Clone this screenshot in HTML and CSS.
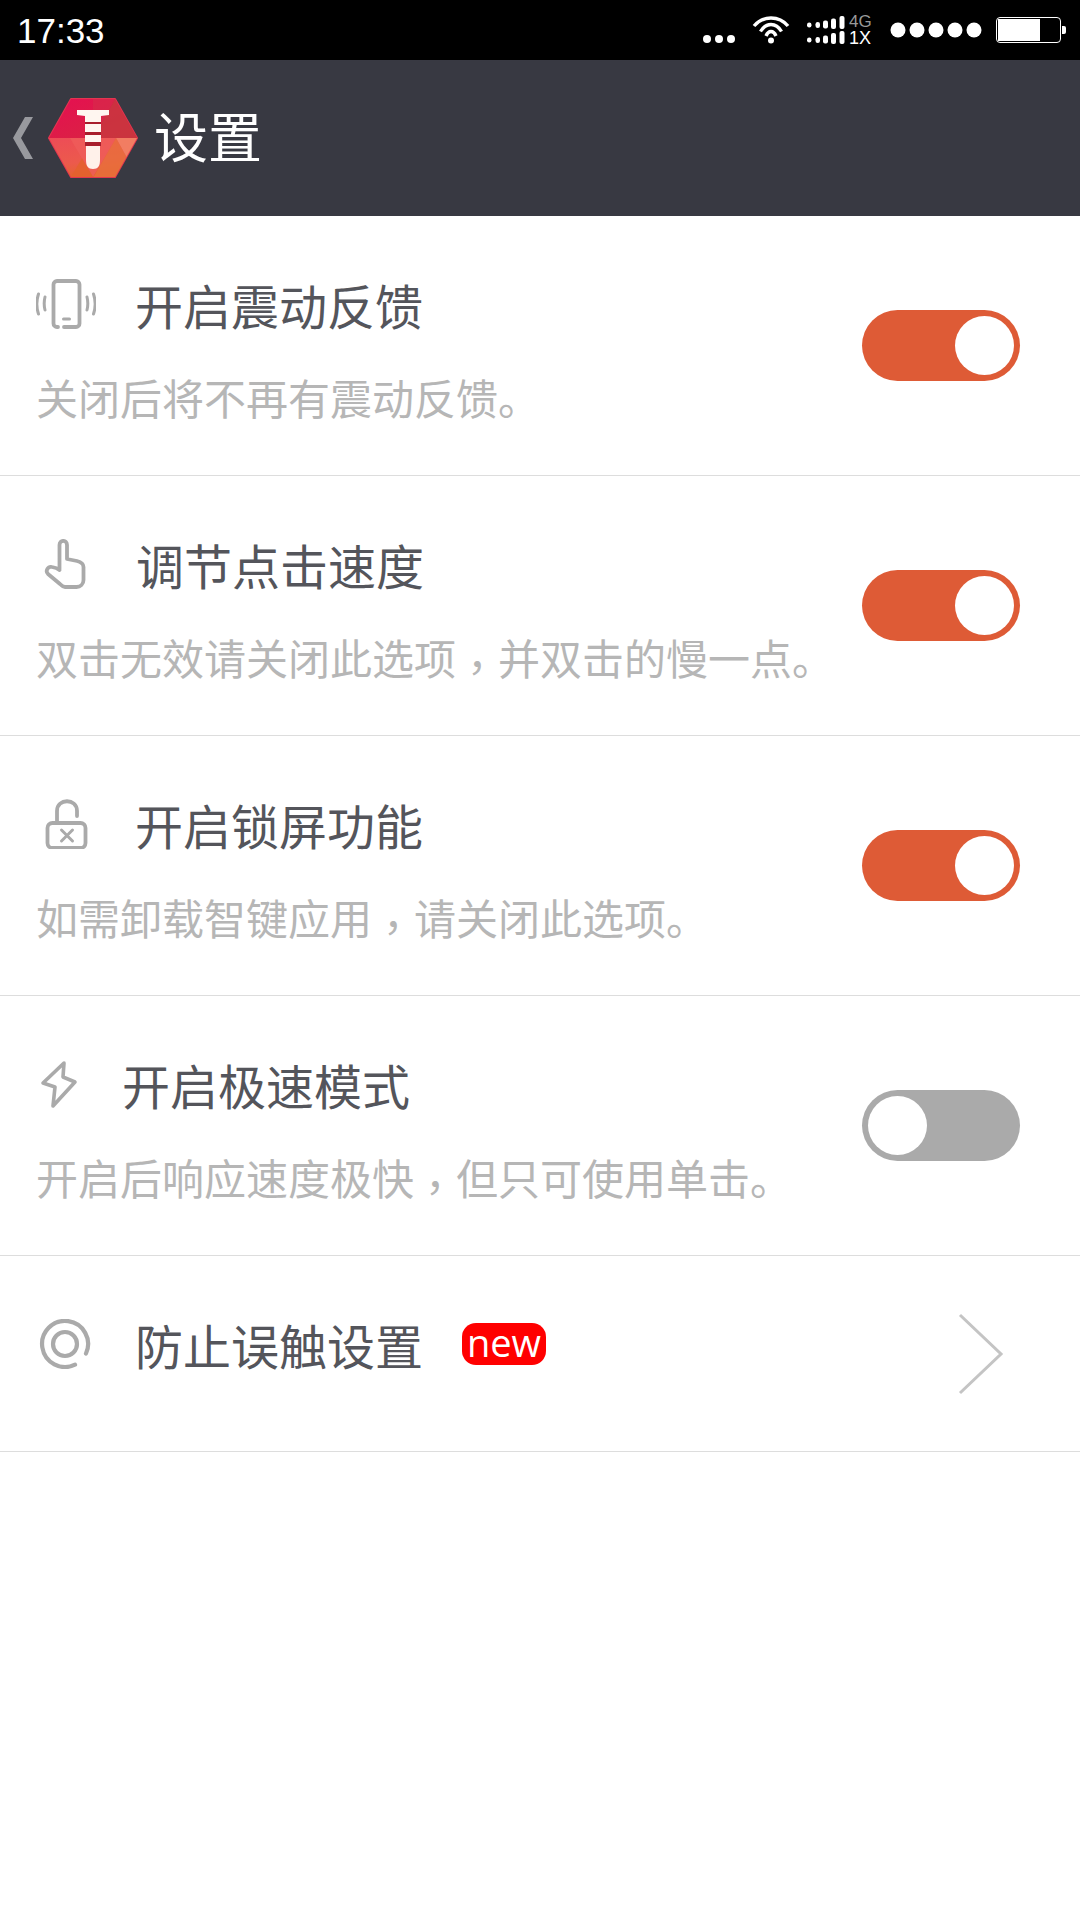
FILE: index.html
```html
<!DOCTYPE html>
<html lang="zh-CN">
<head>
    <meta charset="UTF-8">
    <meta name="viewport" content="width=device-width, initial-scale=1.0">
    <title>设置</title>
    <link rel="stylesheet" href="styles.css">
</head>
<body>
    <div class="status-bar">
        <span class="clock">17:33</span>
        <div class="status-icons">
            <svg class="st-more" width="32" height="8" viewBox="0 0 32 8"><circle cx="4" cy="4" r="4"/><circle cx="16" cy="4" r="4"/><circle cx="28" cy="4" r="4"/></svg>
            <svg class="st-wifi" width="38" height="28" viewBox="0 0 38 28" stroke="#fff" stroke-width="3.400">
                <path d="M2 10C11 -0.700 27 -0.700 36 10"/>
                <path d="M8.500 15.500C14 6.200 24 6.200 29.500 15.500"/>
                <path d="M14 20C16.500 14 21.500 14 24 20"/>
                <circle class="wifi-dot" cx="19" cy="24.500" r="3" stroke="none"/>
            </svg>
            <svg class="st-signal" width="38" height="28" viewBox="0 0 38 28">
                <rect x="0" y="6.500" width="4.500" height="5" rx="2.200"/><rect x="8.500" y="6" width="4.500" height="6" rx="2.200"/><rect x="16" y="4.500" width="5" height="8" rx="2"/><rect x="24" y="2.500" width="5" height="10.500" rx="2"/><rect x="32.500" y="0" width="5" height="13" rx="2"/>
                <rect x="0" y="21.500" width="4.500" height="5" rx="2.200"/><rect x="8.500" y="21" width="4.500" height="6" rx="2.200"/><rect x="16" y="19.500" width="5" height="8" rx="2"/><rect x="24" y="17" width="5" height="11" rx="2"/><rect x="32.500" y="15" width="5" height="13" rx="2"/>
            </svg>
            <div class="st-net"><span class="net-top">4G</span><span class="net-low">1X</span></div>
            <svg class="st-dots" width="92" height="16" viewBox="0 0 92 16"><circle cx="8" cy="8" r="7.500"/><circle cx="27" cy="8" r="7.500"/><circle cx="46" cy="8" r="7.500"/><circle cx="65" cy="8" r="7.500"/><circle cx="84" cy="8" r="7.500"/></svg>
            <div class="battery"><div class="battery-level"></div></div>
            <div class="battery-tip"></div>
        </div>
    </div>

    <div class="app-bar">
        <svg class="back" width="20" height="42" viewBox="0 0 20 42"><polygon points="12,0 20,0 8,21 20,42 12,42 0,21" fill="#98999e"/></svg>
        <svg class="logo" width="90" height="80" viewBox="0 0 90 80">
            <defs>
                <clipPath id="hex"><polygon points="23,1 67,1 89,40 67,79 23,79 1,40"/></clipPath>
                <linearGradient id="hexTop" x1="0" y1="0" x2="1" y2="1"><stop offset="0" stop-color="#e60e52"/><stop offset="1" stop-color="#d6283f"/></linearGradient>
                <linearGradient id="hexLow" x1="0" y1="0" x2="0.300" y2="1"><stop offset="0" stop-color="#ed4c57"/><stop offset="0.650" stop-color="#ec5a4c"/><stop offset="1" stop-color="#e4632c"/></linearGradient>
            </defs>
            <polygon points="23,1 67,1 89,40 67,79 23,79 1,40" fill="#e2364f" stroke="#e2364f" stroke-width="2" stroke-linejoin="round"/>
            <g clip-path="url(#hex)">
                <rect x="0" y="0" width="90" height="40" fill="url(#hexTop)"/>
                <rect x="0" y="40" width="90" height="40" fill="url(#hexLow)"/>
                <polygon points="67,1 90,40 45,40" fill="#c6393d" opacity="0.750"/>
                <polygon points="45,1 67,1 45,40" fill="#d42f49" opacity="0.500"/>
                <polygon points="22,40 68,40 45,79" fill="#ef5c5a" opacity="0.800"/>
                <polygon points="68,40 90,40 79,60" fill="#f27d62"/>
                <polygon points="68,40 79,60 67,80 45,80" fill="#e96f3c" opacity="0.800"/>
                <polygon points="34,60 45,79 23,79" fill="#e4622d" opacity="0.800"/>
            </g>
            <path d="M29 12h32v5l-8 1v6H37v-6l-8-1z" fill="#fff6f0"/>
            <path d="M37 26h16v8H37zM37 37h16v7H37z" fill="#fff6f0"/>
            <path d="M37 24h16v2H37zM37 34h16v3H37zM37 44h16v4H37z" fill="#a81e2c"/>
            <path d="M38 48h14v14c0 6-2 9-7 9s-7-3-7-9z" fill="#fff1ea"/>
        </svg>
        <h1 class="page-title">设置</h1>
    </div>

    <div class="settings">
        <div class="row">
            <div class="row-text">
                <div class="row-head">
                    <svg class="row-icon" width="60" height="50" viewBox="0 0 60 50" fill="none" stroke="#aaa" stroke-width="3.800" stroke-linecap="round">
                        <path d="M22 48h-1c-2 0-3.500-1.500-3.500-3.500V5.500c0-2 1.500-3.500 3.500-3.500h19c2 0 3.500 1.500 3.500 3.500v39c0 2-1.500 3.500-3.500 3.500H28"/>
                        <path d="M27.500 40h6" stroke-width="3"/>
                        <path d="M9 18c-1 4-1 9 0 13M2.500 15c-2 6-2 14 0 20M51 18c1 4 1 9 0 13M57.500 15c2 6 2 14 0 20" stroke-width="3"/>
                    </svg>
                    <span class="row-title">开启震动反馈</span>
                </div>
                <p class="row-sub">关闭后将不再有震动反馈。</p>
            </div>
            <div class="switch on"><div class="knob"></div></div>
        </div>

        <div class="row">
            <div class="row-text">
                <div class="row-head">
                    <svg class="row-icon icon-hand" width="60" height="50" viewBox="0 0 60 50" fill="none" stroke="#aaa" stroke-width="3.800" stroke-linejoin="round" stroke-linecap="round">
                        <path d="M23.500 30V6c0-5.500 7.500-5.500 7.500 0v14l10 2c4 1 6.500 3 6.500 6v13c0 4-3 7-7 7H29c-2 0-3-1-5-3L12 35c-3-3 0-8 4-7 3 .5 5 1 7.500 3"/>
                    </svg>
                    <span class="row-title">调节点击速度</span>
                </div>
                <p class="row-sub">双击无效请关闭此选项<span class="zh-comma" lang="zh-TW">，</span>并双击的慢一点。</p>
            </div>
            <div class="switch on"><div class="knob"></div></div>
        </div>

        <div class="row">
            <div class="row-text">
                <div class="row-head">
                    <svg class="row-icon" width="60" height="50" viewBox="0 0 60 50" fill="none" stroke="#aaa" stroke-width="3.800" stroke-linecap="round">
                        <rect x="11.500" y="24" width="38" height="25" rx="5"/>
                        <path d="M21 24V12c0-13 20-13 20 0v5"/>
                        <path d="M25.500 31l11 11M36.500 31l-11 11" stroke-width="3"/>
                    </svg>
                    <span class="row-title">开启锁屏功能</span>
                </div>
                <p class="row-sub">如需卸载智键应用<span class="zh-comma" lang="zh-TW">，</span>请关闭此选项。</p>
            </div>
            <div class="switch on"><div class="knob"></div></div>
        </div>

        <div class="row">
            <div class="row-text">
                <div class="row-head">
                    <svg class="row-icon icon-narrow" width="48" height="50" viewBox="0 0 48 50" fill="none" stroke="#aaa" stroke-width="3.600" stroke-linejoin="round">
                        <path d="M28 4L7 24l12 4-2 19 22-24-12-5z"/>
                    </svg>
                    <span class="row-title">开启极速模式</span>
                </div>
                <p class="row-sub">开启后响应速度极快<span class="zh-comma" lang="zh-TW">，</span>但只可使用单击。</p>
            </div>
            <div class="switch"><div class="knob"></div></div>
        </div>

        <div class="row row-link">
            <div class="row-head">
                <svg class="row-icon" width="60" height="50" viewBox="0 0 60 50" fill="none" stroke="#aaa" stroke-width="4.200" stroke-linecap="round">
                    <circle cx="29" cy="25" r="12"/>
                    <path d="M39 45.700A23 23 0 1 1 50 34.500"/>
                </svg>
                <span class="row-title">防止误触设置</span>
                <span class="badge">new</span>
            </div>
            <svg class="chevron" width="46" height="82" viewBox="0 0 46 82" fill="none" stroke="#c4c4c4" stroke-width="3"><path d="M2 2l41 39L2 80"/></svg>
        </div>
    </div>
</body>
</html>
```

FILE: styles.css
```css
* {
    box-sizing: border-box;
}
body {
    margin: 0;
    width: 1080px;
    height: 1920px;
    background: #fff;
    font-family: "Noto Sans CJK SC", "Liberation Sans", sans-serif;
    overflow: hidden;
}

/* status bar */
.status-bar {
    height: 60px;
    background: #000;
    color: #fff;
    display: flex;
    align-items: center;
    justify-content: space-between;
    padding: 0 14px 0 17px;
}
.clock {
    padding-top: 2px;
    font-family: "Liberation Sans", sans-serif;
    font-size: 35px;
}
.status-icons {
    display: flex;
    align-items: center;
}
.status-icons svg {
    fill: #fff;
}
.st-more {
    margin: 18px 17px 0 0;
}
.status-icons .st-wifi {
    margin: 0 17px 0 0;
    fill: none;
}
.wifi-dot {
    fill: #fff;
}
.st-net {
    display: flex;
    flex-direction: column;
    width: 24px;
    margin: 0 17px 0 4px;
    font-family: "Liberation Sans", sans-serif;
    line-height: 16px;
}
.net-top {
    color: #999;
    font-size: 17px;
}
.net-low {
    font-size: 18px;
}
.st-dots {
    margin-right: 14px;
}
.battery {
    width: 65px;
    height: 26px;
    border: 1px solid #fff;
    border-radius: 4px;
    padding: 1px;
}
.battery-level {
    width: 42px;
    height: 100%;
    background: #fff;
}
.battery-tip {
    width: 4px;
    height: 8px;
    margin-left: 1px;
    background: #fff;
    border-radius: 0 2px 2px 0;
}

/* title bar */
.app-bar {
    height: 156px;
    background: #383942;
    display: flex;
    align-items: center;
    padding-left: 13px;
}
.back {
    margin-right: 15px;
}
.logo {
    margin-right: 16px;
}
.page-title {
    margin: 0 0 8px;
    color: #fff;
    font-size: 54px;
    font-weight: 400;
}

/* setting rows */
.row {
    height: 260px;
    padding: 0 60px 0 36px;
    border-bottom: 1px solid #ddd;
    display: flex;
    align-items: center;
    justify-content: space-between;
}
.row-text {
    padding-top: 9px;
}
.row-head {
    display: flex;
    align-items: center;
    height: 60px;
}
.row-icon {
    margin-right: 39px;
}
.icon-hand {
    margin-right: 40px;
}
.icon-narrow {
    margin-right: 38px;
}
.row-title {
    color: #54555b;
    font-size: 48px;
}
.row-sub {
    margin: 33px 0 0;
    color: #b6b6b6;
    font-size: 42px;
    line-height: 60px;
}
/* full-width comma sits centred in its cell, a little under the middle */
.zh-comma {
    font-family: "Noto Sans CJK TC", sans-serif;
    line-height: 0;
    vertical-align: -8px;
}
.row-link {
    height: 196px;
    padding-right: 76px;
}
.row-link .row-head {
    margin-bottom: 20px;
}
.badge {
    margin-left: 39px;
    width: 84px;
    height: 42px;
    border-radius: 14px;
    background: #f00;
    color: #fff;
    font-family: "Open Sans", sans-serif;
    font-size: 38px;
    line-height: 38px;
    text-align: center;
}

/* toggle */
.switch {
    width: 158px;
    height: 71px;
    flex: none;
    border-radius: 36px;
    background: #aaa;
    padding: 6px;
    display: flex;
}
.switch.on {
    background: #de5b36;
    justify-content: flex-end;
}
.knob {
    width: 59px;
    height: 59px;
    border-radius: 50%;
    background: #fff;
}
```
